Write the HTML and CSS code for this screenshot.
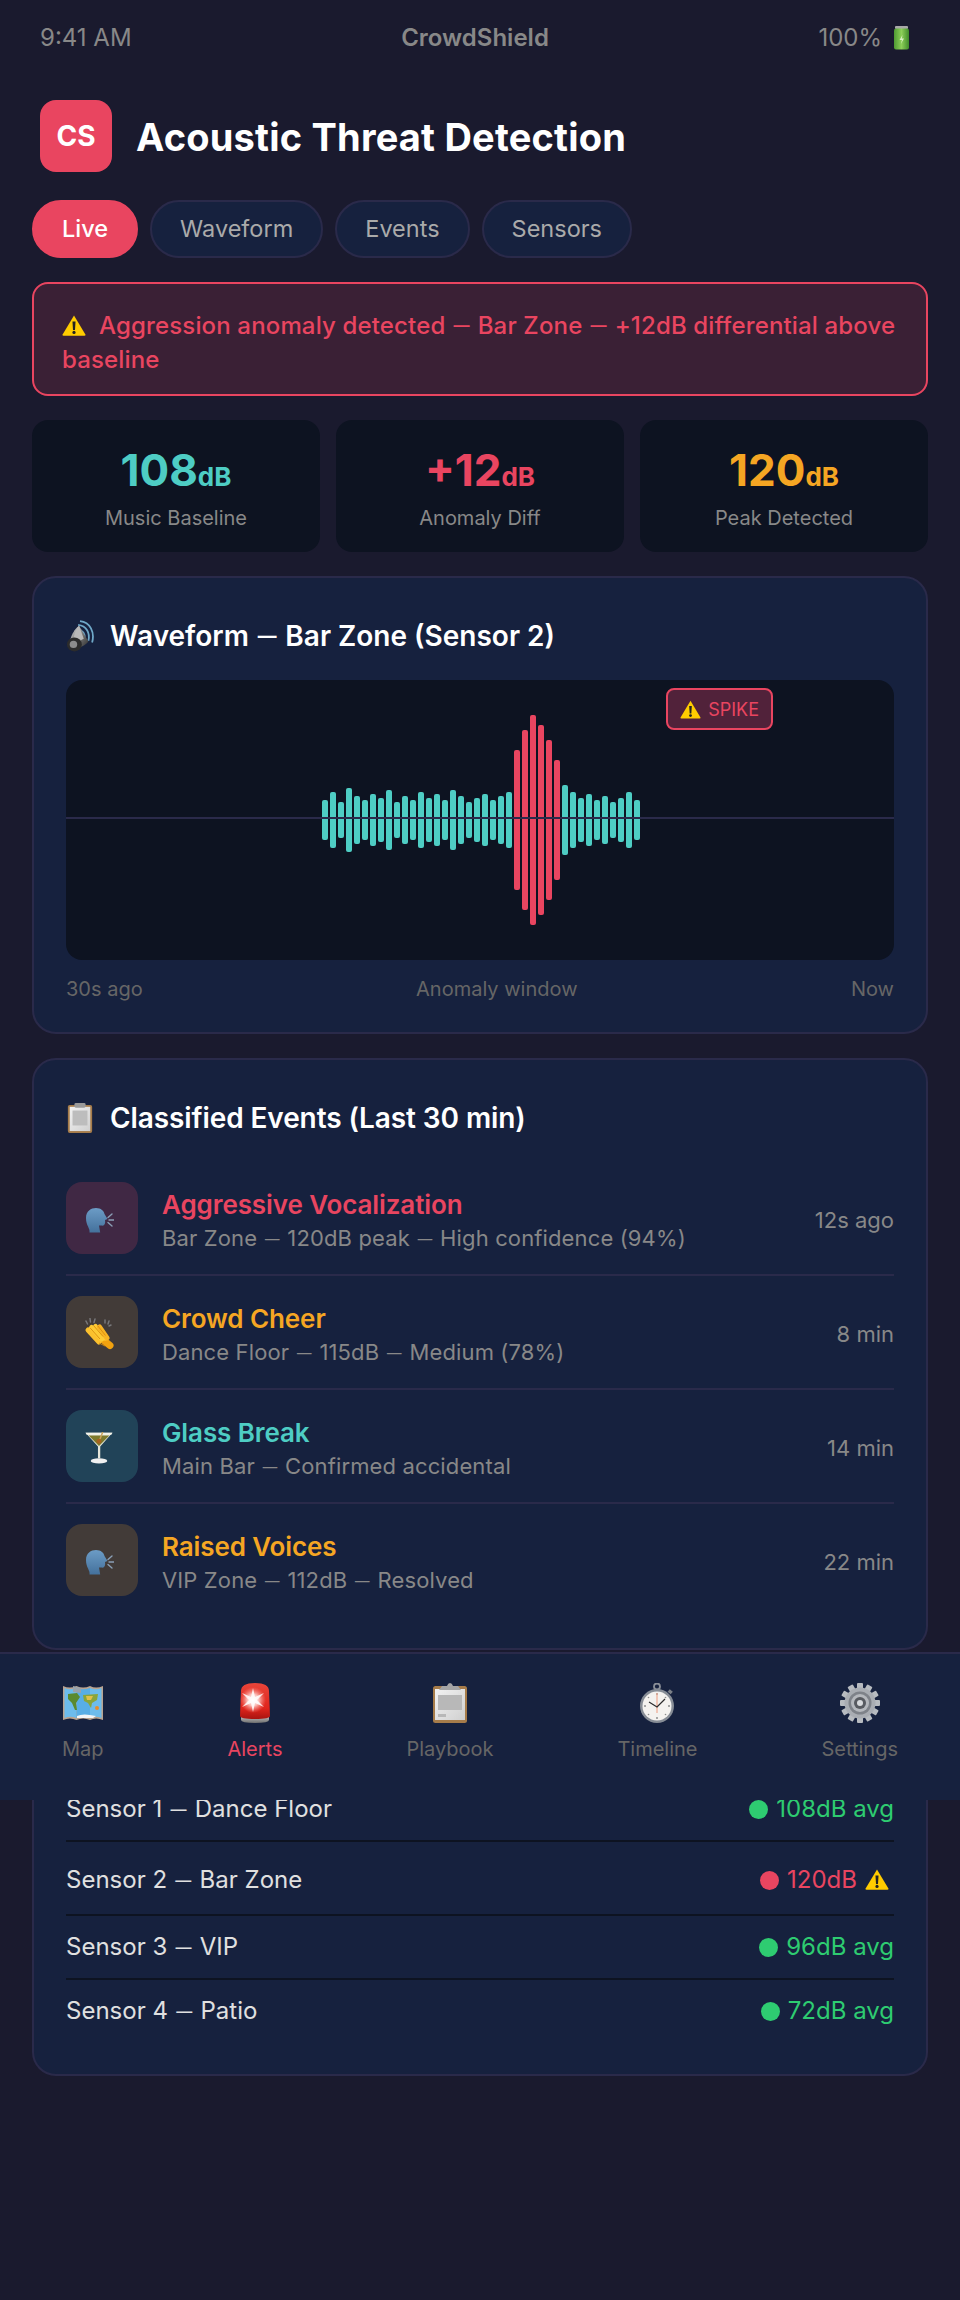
FILE: index.html
```html
<!DOCTYPE html>
<html lang="en">
<head>
<meta charset="utf-8">
<title>CrowdShield</title>
<link rel="stylesheet" href="styles.css">
</head>
<body>
<svg class="defs" aria-hidden="true">
  <defs>
    <linearGradient id="gRed" x1="0" y1="0" x2="0" y2="1"><stop offset="0" stop-color="#e8453a"/><stop offset=".7" stop-color="#e0241c"/><stop offset="1" stop-color="#a81410"/></linearGradient>
    <linearGradient id="gBase" x1="0" y1="0" x2="0" y2="1"><stop offset="0" stop-color="#d8d8d8"/><stop offset="1" stop-color="#6f6f6f"/></linearGradient>
    <linearGradient id="gHead" x1="0" y1="0" x2="0" y2="1"><stop offset="0" stop-color="#6c9cc6"/><stop offset="1" stop-color="#44719c"/></linearGradient>
    <linearGradient id="gBat" x1="0" y1="0" x2="1" y2="0"><stop offset="0" stop-color="#4f9a32"/><stop offset=".5" stop-color="#8ccf58"/><stop offset="1" stop-color="#3f8a2a"/></linearGradient>
    <linearGradient id="gPaper" x1="0" y1="0" x2="1" y2="1"><stop offset="0" stop-color="#f2f2f2"/><stop offset="1" stop-color="#d0d0d0"/></linearGradient>
    <linearGradient id="gCone" x1="0" y1="0" x2="1" y2="1"><stop offset="0" stop-color="#e0e0e0"/><stop offset=".5" stop-color="#7a7a7a"/><stop offset="1" stop-color="#2a2a2a"/></linearGradient>
    <radialGradient id="gFlash" cx=".5" cy=".5" r=".5"><stop offset="0" stop-color="#fff"/><stop offset=".45" stop-color="#ffd9d4" stop-opacity=".85"/><stop offset="1" stop-color="#ff8a80" stop-opacity="0"/></radialGradient>
    <symbol id="warn" viewBox="0 0 24 21">
      <path d="M12 .5 L23.4 19.5 Q23.8 20.8 22.4 20.8 L1.6 20.8 Q.2 20.8 .6 19.5 Z" fill="#ffcc00"/>
      <path d="M10.5 6.5 h3 l-.5 8.5 h-2 Z" fill="#222"/>
      <circle cx="12" cy="17.4" r="1.6" fill="#222"/>
    </symbol>
    <symbol id="head" viewBox="0 0 30 26">
      <path d="M2 11 C2 4 7 1 12 1 C17 1 20 4 20.5 7 L23.5 12 L21 13 C21.5 16 21 19 17.5 18.6 L15 18.4 L16.2 25.4 L5.5 25.4 C6.4 21.6 2 18.6 2 11 Z" fill="url(#gHead)"/>
      <g stroke="#8a9fb5" stroke-width="1.4" stroke-linecap="round"><path d="M24 10.5 L28 7"/><path d="M25 13 L30 13"/><path d="M24 15.5 L28 19"/></g>
    </symbol>
  </defs>
</svg>

<header class="status">
  <span>9:41 AM</span>
  <span class="status-name">CrowdShield</span>
  <span class="status-bat">100%
    <svg class="ico-bat" viewBox="0 0 18 24"><rect x="2" y="0" width="13" height="3" rx="1" fill="#a9a9a9"/><rect x="1" y="2.5" width="15" height="21" rx="2" fill="url(#gBat)"/><path d="M9.5 9 L6.5 14 L9 14 L7.8 18 L11 12.6 L8.8 12.6 Z" fill="#d9f0c4"/></svg>
  </span>
</header>

<div class="head">
  <div class="logo">CS</div>
  <h1>Acoustic Threat Detection</h1>
</div>

<nav class="tabs">
  <a class="tab tab-on">Live</a>
  <a class="tab">Waveform</a>
  <a class="tab">Events</a>
  <a class="tab">Sensors</a>
</nav>

<div class="alert"><svg class="ico-warn-a"><use href="#warn"/></svg>Aggression anomaly detected <span class="dash">—</span> Bar Zone <span class="dash">—</span> +12dB differential above <span>baseline</span></div>

<section class="stats">
  <div class="stat"><div class="val teal">108<span class="unit">dB</span></div><div class="lab">Music Baseline</div></div>
  <div class="stat"><div class="val red">+12<span class="unit">dB</span></div><div class="lab">Anomaly Diff</div></div>
  <div class="stat"><div class="val orange">120<span class="unit">dB</span></div><div class="lab">Peak Detected</div></div>
</section>

<section class="card">
  <h2>
    <svg class="ico-title" viewBox="0 0 30 36">
      <g fill="none" stroke="#6fa8c8" stroke-width="1.9"><path d="M15 2 C26 3 31 14 28 25"/><path d="M13 6 C22 7 26 15 24 23"/><path d="M12 10.5 C18 11.5 21 16 20 21"/></g>
      <path d="M14 7 L24 24 C20 29 11 33 5 31 C2 24 7 12 14 7 Z" fill="url(#gCone)"/>
      <path d="M14 7 L19 21 L9 26 C7 19 10 11 14 7 Z" fill="#b9b9b9"/>
      <ellipse cx="9" cy="27" rx="8" ry="7.5" fill="#2c2c2c"/>
      <ellipse cx="8" cy="27" rx="4" ry="3.8" fill="#8c8c8c"/>
    </svg>
    <span>Waveform <span class="dash">—</span> Bar Zone (Sensor 2)</span>
  </h2>
  <div class="wave">
    <div class="bars">
      <i class="bar" style="height:40px"></i><i class="bar" style="height:56px"></i><i class="bar" style="height:36px"></i><i class="bar" style="height:64px"></i><i class="bar" style="height:48px"></i><i class="bar" style="height:40px"></i><i class="bar" style="height:52px"></i><i class="bar" style="height:44px"></i><i class="bar" style="height:60px"></i><i class="bar" style="height:36px"></i><i class="bar" style="height:48px"></i><i class="bar" style="height:40px"></i><i class="bar" style="height:56px"></i><i class="bar" style="height:44px"></i><i class="bar" style="height:52px"></i><i class="bar" style="height:40px"></i><i class="bar" style="height:60px"></i><i class="bar" style="height:48px"></i><i class="bar" style="height:36px"></i><i class="bar" style="height:44px"></i><i class="bar" style="height:52px"></i><i class="bar" style="height:40px"></i><i class="bar" style="height:48px"></i><i class="bar" style="height:56px"></i>
      <i class="bar hot" style="height:140px"></i><i class="bar hot" style="height:180px"></i><i class="bar hot" style="height:210px"></i><i class="bar hot" style="height:190px"></i><i class="bar hot" style="height:160px"></i><i class="bar hot" style="height:120px"></i>
      <i class="bar" style="height:70px"></i><i class="bar" style="height:56px"></i><i class="bar" style="height:44px"></i><i class="bar" style="height:52px"></i><i class="bar" style="height:40px"></i><i class="bar" style="height:48px"></i><i class="bar" style="height:36px"></i><i class="bar" style="height:44px"></i><i class="bar" style="height:56px"></i><i class="bar" style="height:40px"></i>
    </div>
    <div class="midline"></div>
    <div class="spike"><svg class="ico-warn-s"><use href="#warn"/></svg>SPIKE</div>
  </div>
  <div class="wave-foot"><span>30s ago</span><span>Anomaly window</span><span>Now</span></div>
</section>

<section class="card">
  <h2>
    <svg class="ico-title" viewBox="0 0 30 36">
      <rect x="2" y="4" width="26" height="30" rx="2" fill="#a67c4a"/>
      <rect x="4" y="6" width="22" height="26" fill="url(#gPaper)"/>
      <rect x="7" y="10" width="16" height="16" fill="#bdbdbd"/>
      <rect x="9" y="2" width="12" height="5" rx="1.5" fill="#9a9a9a"/>
    </svg>
    <span class="tight">Classified Events (Last 30 min)</span>
  </h2>
  <div class="event">
    <div class="ev-ico tint-red"><svg class="ico-ev"><use href="#head"/></svg></div>
    <div class="ev-body"><div class="ev-name red">Aggressive Vocalization</div><div class="ev-sub">Bar Zone <span class="dash">—</span> 120dB peak <span class="dash">—</span> High confidence (94%)</div></div>
    <div class="ev-time">12s ago</div>
  </div>
  <div class="event">
    <div class="ev-ico tint-orange">
      <svg class="ico-ev-tall" viewBox="0 0 30 32">
        <g stroke="#77777a" stroke-width="1.5" stroke-linecap="round"><path d="M2 3 L3.5 6"/><path d="M6 .5 L6.5 4"/><path d="M11 1 L10 4.5"/><path d="M21 2 L21 5"/><path d="M25 3 L24 6"/><path d="M27 7 L25 8"/></g>
        <g stroke-linecap="round" fill="none">
          <path d="M18 21 L26 27.5" stroke="#f2a20f" stroke-width="7"/>
          <path d="M4 12 L15 24" stroke="#fbc02d" stroke-width="5"/>
          <path d="M7.5 9.5 L18 21" stroke="#fdcb35" stroke-width="5"/>
          <path d="M11.5 8.5 L21 20" stroke="#fdcb35" stroke-width="5"/>
          <path d="M15.5 9 L23 20" stroke="#f7b324" stroke-width="5"/>
        </g>
        <g stroke="#d98c0c" stroke-width=".9" fill="none"><path d="M6 9.8 L16 21"/><path d="M9.8 7.8 L19 18.5"/><path d="M13.8 7.8 L21.5 17.5"/><path d="M15 25 L21 28"/></g>
      </svg>
    </div>
    <div class="ev-body"><div class="ev-name orange">Crowd Cheer</div><div class="ev-sub">Dance Floor <span class="dash">—</span> 115dB <span class="dash">—</span> Medium (78%)</div></div>
    <div class="ev-time">8 min</div>
  </div>
  <div class="event">
    <div class="ev-ico tint-teal">
      <svg class="ico-ev-tall" viewBox="0 0 26 31">
        <path d="M0 .8 L26 .8 L14.2 14 L14.2 25.5 L12 25.5 L12 14 Z" fill="#e6e6da"/>
        <path d="M3 3.5 L23 3.5 L13 13.5 Z" fill="#7d7a2c"/>
        <path d="M0 .8 L26 .8 L25 2.6 L1 2.6 Z" fill="#f3f3ea"/>
        <path d="M17 -1 L13.5 8" stroke="#c9a25a" stroke-width="1.4"/>
        <circle cx="13" cy="9" r="2.4" fill="#a5621f"/>
        <ellipse cx="13" cy="28" rx="8" ry="2.6" fill="#f0f0f0"/>
      </svg>
    </div>
    <div class="ev-body"><div class="ev-name teal">Glass Break</div><div class="ev-sub">Main Bar <span class="dash">—</span> Confirmed accidental</div></div>
    <div class="ev-time">14 min</div>
  </div>
  <div class="event">
    <div class="ev-ico tint-orange"><svg class="ico-ev"><use href="#head"/></svg></div>
    <div class="ev-body"><div class="ev-name orange">Raised Voices</div><div class="ev-sub">VIP Zone <span class="dash">—</span> 112dB <span class="dash">—</span> Resolved</div></div>
    <div class="ev-time">22 min</div>
  </div>
</section>

<section class="card card-sensors">
  <div class="sensor"><span>Sensor 1 <span class="dash">—</span> Dance Floor</span><span class="s-val green"><i class="dot dot-green"></i>108dB avg</span></div>
  <div class="sensor sensor-alert"><span>Sensor 2 <span class="dash">—</span> Bar Zone</span><span class="s-val red"><i class="dot dot-red"></i>120dB<svg class="ico-warn-r"><use href="#warn"/></svg></span></div>
  <div class="sensor"><span>Sensor 3 <span class="dash">—</span> VIP</span><span class="s-val green"><i class="dot dot-green"></i>96dB avg</span></div>
  <div class="sensor"><span>Sensor 4 <span class="dash">—</span> Patio</span><span class="s-val green"><i class="dot dot-green"></i>72dB avg</span></div>
</section>

<footer class="bottom">
  <a class="nav-item">
    <svg class="nav-ico" viewBox="0 0 40 40">
      <path d="M0 3 Q7 6 13.5 3 Q20 6 27 3 Q33 6 40 3 L40 37 Q33 34 27 37 Q20 34 13.5 37 Q7 34 0 37 Z" fill="#b9a491"/>
      <path d="M1.5 5 Q7 7.5 13.5 5 L13.5 35 Q7 32.5 1.5 35 Z" fill="#6dbcec"/>
      <path d="M13.5 5 Q20 7.5 27 5 L27 35 Q20 32.5 13.5 35 Z" fill="#58aee6"/>
      <path d="M27 5 Q33 7.5 38.5 5 L38.5 35 Q33 32.5 27 35 Z" fill="#6dbcec"/>
      <path d="M5 11 L14 10 L17 14 L13 20 L14 27 L12 27 L9 20 L5 16 Z" fill="#5a8a2e"/>
      <path d="M20 12 L35 11 L34 17 L29 20 L28 25 L25 20 L21 18 Z" fill="#8aa53a"/>
      <path d="M23 13 L30 13 L28 17 L24 17 Z" fill="#e2c04a"/>
      <circle cx="34" cy="25" r="2" fill="#e88d2c"/>
      <path d="M10 3 L18 5 L18 10 L10 9 Z" fill="#9aa3ab"/>
      <path d="M14 33 Q20 30 33 33 L30 35 L14 35 Z" fill="#f2f5f7"/>
    </svg>
    <span>Map</span>
  </a>
  <a class="nav-item nav-on">
    <svg class="nav-ico" viewBox="0 0 40 40">
      <path d="M6 34 Q6 31 20 31 Q34 31 34 34 L34 37 Q34 40 20 40 Q6 40 6 37 Z" fill="url(#gBase)"/>
      <path d="M6 8 Q6 0 20 0 Q34 0 34 8 L35 33 Q35 36 20 36 Q5 36 5 33 Z" fill="url(#gRed)"/>
      <circle cx="18" cy="17" r="13" fill="url(#gFlash)"/>
      <path d="M18 5 L20 14 L29 10 L22 17 L29 24 L20 20 L18 29 L16 20 L7 24 L14 17 L7 10 L16 14 Z" fill="#fff" opacity=".85"/>
    </svg>
    <span>Alerts</span>
  </a>
  <a class="nav-item">
    <svg class="nav-ico" viewBox="0 0 40 40">
      <rect x="3" y="3" width="34" height="37" rx="2.5" fill="#a67c4a"/>
      <rect x="5" y="6" width="30" height="31" fill="url(#gPaper)"/>
      <rect x="8" y="12" width="24" height="15" fill="#b8b8b8"/>
      <rect x="8" y="31" width="8" height="3" fill="#b8b8b8"/>
      <path d="M9 7 L12 3 L17 3 Q18 0 20 0 Q22 0 23 3 L28 3 L31 7 Z" fill="#a5a5a5"/>
    </svg>
    <span>Playbook</span>
  </a>
  <a class="nav-item">
    <svg class="nav-ico" viewBox="0 0 40 40">
      <circle cx="20" cy="3.5" r="3" fill="none" stroke="#8a8f97" stroke-width="1.8"/>
      <rect x="18" y="6" width="4" height="3" fill="#8a8f97"/>
      <rect x="31" y="7" width="4" height="3.4" fill="#7b7f86" transform="rotate(40 33 9)"/>
      <circle cx="20" cy="23" r="17" fill="#878d96"/>
      <circle cx="20" cy="23" r="14.5" fill="#f4f2ef"/>
      <g fill="#8c8c8c"><circle cx="20" cy="11" r="1"/><circle cx="20" cy="35" r="1"/><circle cx="8" cy="23" r="1"/><circle cx="32" cy="23" r="1"/><circle cx="11.5" cy="14.5" r=".8"/><circle cx="28.5" cy="14.5" r=".8"/><circle cx="11.5" cy="31.5" r=".8"/><circle cx="28.5" cy="31.5" r=".8"/></g>
      <path d="M20 10 L20 30" stroke="#efa88f" stroke-width="1.2"/>
      <path d="M12 19 L20 24 L28 16" fill="none" stroke="#2d2d2d" stroke-width="1.2"/>
    </svg>
    <span>Timeline</span>
  </a>
  <a class="nav-item">
    <svg class="nav-ico" viewBox="0 0 40 40">
      <g fill="#b7bbc0">
        <rect x="17" y="0" width="6" height="40" rx="1"/>
        <rect x="17" y="0" width="6" height="40" rx="1" transform="rotate(30 20 20)"/>
        <rect x="17" y="0" width="6" height="40" rx="1" transform="rotate(60 20 20)"/>
        <rect x="17" y="0" width="6" height="40" rx="1" transform="rotate(90 20 20)"/>
        <rect x="17" y="0" width="6" height="40" rx="1" transform="rotate(120 20 20)"/>
        <rect x="17" y="0" width="6" height="40" rx="1" transform="rotate(150 20 20)"/>
      </g>
      <circle cx="20" cy="20" r="15.5" fill="#a9adb3"/>
      <circle cx="20" cy="20" r="11.5" fill="#7e8289"/>
      <circle cx="20" cy="20" r="9" fill="#b5b8bd"/>
      <circle cx="20" cy="20" r="6" fill="#585b61"/>
      <circle cx="20" cy="20" r="3" fill="#d7d9dc"/>
    </svg>
    <span>Settings</span>
  </a>
</footer>
</body>
</html>
```

FILE: styles.css
```css
* { box-sizing: border-box; }
html, body { margin: 0; padding: 0; }
body {
  position: relative;
  width: 960px;
  height: 2300px;
  overflow: hidden;
  background: #1a1a2e;
  color: #fff;
  font-family: Inter, "Liberation Sans", sans-serif;
}
.defs { position: absolute; width: 0; height: 0; }
.dash { font-family: Lato, Inter, sans-serif; line-height: 0; }
.tight { letter-spacing: -.1px; }
.status {
  display: flex;
  justify-content: space-between;
  padding: 21px 40px 19px;
  height: 74px;
  font-size: 24px;
  line-height: 34px;
  color: #888;
}
.status-name { font-weight: 600; }
.status-bat { display: flex; align-items: center; gap: 11px; padding-right: 9px; }
.ico-bat { width: 18px; height: 24px; }
.head {
  display: flex;
  align-items: center;
  gap: 24px;
  padding: 26px 40px 28px;
}
.logo {
  width: 72px;
  height: 72px;
  border-radius: 16px;
  background: #e94560;
  display: flex;
  align-items: center;
  justify-content: center;
  font-size: 28px;
  font-weight: 700;
}
h1 { margin: 2px 0 0; font-size: 38px; font-weight: 700; line-height: 50px; letter-spacing: .2px; }
.tabs { display: flex; gap: 12px; padding: 0 32px; margin-bottom: 24px; }
.tab {
  padding: 12px 28px;
  border: 2px solid #2a2a4a;
  border-radius: 30px;
  background: #16213e;
  color: #aaa;
  font-size: 23.5px;
  line-height: 30px;
}
.tab-on { background: #e94560; border-color: #e94560; color: #fff; font-weight: 500; }
.alert {
  margin: 0 32px 24px;
  padding: 25px 28px 0;
  height: 114px;
  border: 2px solid #e94560;
  border-radius: 16px;
  background: #3a2035;
  color: #e94560;
  font-size: 24px;
  font-weight: 500;
  line-height: 34px;
  letter-spacing: .15px;
}
.ico-warn-a { width: 24px; height: 21px; margin-right: 13px; vertical-align: -2px; }
.stats {
  display: grid;
  grid-template-columns: repeat(3, 1fr);
  gap: 16px;
  margin: 0 32px 24px;
}
.stat {
  height: 132px;
  padding-top: 24px;
  border-radius: 16px;
  background: #0d1321;
  text-align: center;
}
.val { font-size: 44px; font-weight: 700; line-height: 52px; }
.unit { font-size: 26px; }
.lab { margin-top: 1px; font-size: 20px; line-height: 28px; color: #888; }
.teal { color: #4ecdc4; }
.red { color: #e94560; }
.orange { color: #f5a623; }
.green { color: #2ecc71; }
.card {
  margin: 0 32px 24px;
  padding: 32px;
  border: 2px solid #2a2a4a;
  border-radius: 24px;
  background: #16213e;
}
.card-sensors { padding-top: 102px; }
h2 {
  display: flex;
  align-items: center;
  gap: 16px;
  margin: 0 0 18px;
  height: 52px;
  font-size: 28px;
  font-weight: 600;
  line-height: 52px;
}
.ico-title { width: 28px; height: 34px; flex: none; }
.wave {
  position: relative;
  height: 280px;
  border-radius: 16px;
  background: #0d1321;
}
.bars {
  display: flex;
  align-items: center;
  justify-content: center;
  gap: 2px;
  height: 100%;
  padding-left: 2px;
}
.bar { width: 6px; border-radius: 2px; background: #4ecdc4; }
.hot { background: #e94560; }
.midline {
  position: absolute;
  left: 0;
  right: 0;
  top: 137px;
  height: 2px;
  background: #2a2a4a;
}
.spike {
  position: absolute;
  top: 8px;
  right: 121px;
  display: flex;
  align-items: center;
  gap: 7px;
  height: 42px;
  padding: 0 12px;
  border: 2px solid #e94560;
  border-radius: 8px;
  background: #51223a;
  color: #e94560;
  font-size: 18px;
}
.ico-warn-s { width: 21px; height: 19px; }
.wave-foot {
  display: flex;
  justify-content: space-between;
  margin-top: 18px;
  font-size: 20px;
  line-height: 22px;
  color: #666;
}
.event {
  display: flex;
  align-items: center;
  gap: 24px;
  padding: 20px 0;
  border-bottom: 2px solid #2a2a4a;
}
.event:last-child { border-bottom: 0; }
.ev-ico {
  display: flex;
  align-items: center;
  justify-content: center;
  width: 72px;
  height: 72px;
  flex: none;
  padding: 4px 6px 0 0;
  border-radius: 16px;
}
.tint-red { background: rgba(233, 69, 96, .2); }
.tint-orange { background: rgba(245, 166, 35, .2); }
.tint-teal { background: rgba(78, 205, 196, .2); }
.ico-ev { width: 30px; height: 26px; }
.ico-ev-tall { width: 30px; height: 32px; }
.ev-body { flex: 1; padding-top: 3px; }
.ev-name { font-size: 26px; font-weight: 600; line-height: 36px; letter-spacing: -.1px; }
.ev-sub { font-size: 22px; line-height: 30px; color: #888; letter-spacing: .13px; }
.ev-time { padding-top: 3px; font-size: 22px; color: #888; }
.sensor {
  display: flex;
  justify-content: space-between;
  align-items: center;
  padding: 16px 0;
  border-bottom: 2px solid #0d1321;
  font-size: 24px;
  line-height: 30px;
  color: #e0e0e0;
}
.sensor:last-child { border-bottom: 0; }
.sensor-alert { padding: 23px 0 19px; }
.s-val { display: flex; align-items: center; gap: 8px; }
.dot { width: 19px; height: 19px; border-radius: 50%; }
.dot-green { background: #2ecc71; }
.dot-red { background: #e94560; }
.ico-warn-r { width: 24px; height: 21px; margin: -2px 5px 0 0; }
.bottom {
  position: absolute;
  top: 1652px;
  left: 0;
  right: 0;
  height: 148px;
  display: flex;
  justify-content: space-around;
  padding-top: 29px;
  border-top: 2px solid #2a2a4a;
  background: #16213e;
}
.nav-item {
  display: flex;
  flex-direction: column;
  align-items: center;
  gap: 12px;
  font-size: 20px;
  line-height: 28px;
  color: #666;
}
.nav-on { color: #e94560; }
.nav-ico { width: 40px; height: 40px; }
```
